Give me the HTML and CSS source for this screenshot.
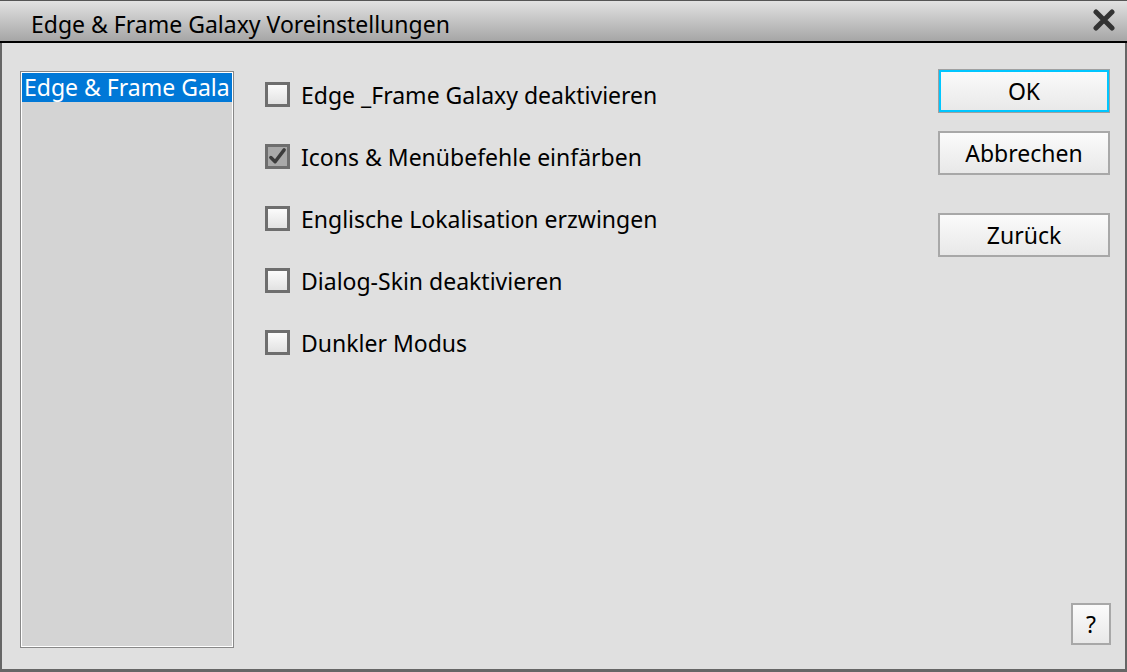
FILE: index.html
```html
<!DOCTYPE html>
<html lang="de">
<head>
<meta charset="utf-8">
<title>Edge &amp; Frame Galaxy Voreinstellungen</title>
<link rel="stylesheet" href="styles.css">
</head>
<body>
<div class="window">
  <div class="titlebar">
    <span class="title">Edge &amp; Frame Galaxy Voreinstellungen</span>
    <svg class="close" width="22" height="22" viewBox="0 0 22 22"><path d="M3 3 L19 19 M19 3 L3 19" stroke="#333" stroke-width="5" stroke-linecap="round"/></svg>
  </div>
  <div class="body">
    <div class="list">
      <div class="list-inner">
        <div class="item selected">Edge &amp; Frame Gala</div>
      </div>
    </div>
    <div class="options">
      <label class="opt"><span class="cb"></span><span>Edge _Frame Galaxy deaktivieren</span></label>
      <label class="opt"><span class="cb checked"><svg width="20" height="20" viewBox="0 0 20 20"><path d="M3 10.5 L7.5 15 L17 2.5" fill="none" stroke="#3c3c3c" stroke-width="3.6" stroke-linecap="round" stroke-linejoin="round"/></svg></span><span>Icons &amp; Menübefehle einfärben</span></label>
      <label class="opt"><span class="cb"></span><span>Englische Lokalisation erzwingen</span></label>
      <label class="opt"><span class="cb"></span><span>Dialog-Skin deaktivieren</span></label>
      <label class="opt"><span class="cb"></span><span>Dunkler Modus</span></label>
    </div>
    <div class="side">
      <div class="buttons">
        <button class="btn default">OK</button>
        <button class="btn">Abbrechen</button>
        <button class="btn back">Zurück</button>
      </div>
      <button class="btn help">?</button>
    </div>
  </div>
</div>
</body>
</html>
```
FILE: styles.css
```css
* { box-sizing: border-box; }
html, body { margin: 0; padding: 0; }
body {
  width: 1127px; height: 672px; overflow: hidden;
  font-family: "Noto Sans", "Open Sans", "Liberation Sans", sans-serif;
  color: #000;
}
.window {
  width: 1127px; height: 672px;
  display: flex; flex-direction: column;
  background: #e0e0e0;
  border-left: 2px solid #666;
  border-right: 2px solid #666;
  border-bottom: 3px solid #666;
}
.titlebar {
  height: 43px;
  margin: 0 -2px;
  border-top: 1px solid #555;
  border-bottom: 2px solid #000;
  background: linear-gradient(#e2e2e2, #a6a6a6);
  display: flex; align-items: center; justify-content: space-between;
  padding: 0 12px 0 31px;
}
.title { font-size: 23px; line-height: 1; padding-top: 6px; }
.close { display: block; margin-top: -2px; }
.body { flex: 1; display: flex; padding: 28px 15px 21px 18px; }
.list {
  width: 214px; height: 577px;
  border: 1px solid #888;
  background: #fff;
  padding: 1px;
}
.list-inner { width: 100%; height: 100%; background: #d4d4d4; overflow: hidden; }
.item {
  height: 29px; font-size: 23px; line-height: 29px;
  white-space: nowrap; padding-left: 2px; overflow: hidden;
}
.item.selected { background: #0078d7; color: #fff; }
.options { flex: 1; display: flex; flex-direction: column; gap: 37px; padding: 11px 0 0 31px; }
.opt { display: flex; align-items: center; gap: 11px; font-size: 23px; height: 25px; }
.cb {
  width: 25px; height: 25px; flex: none;
  border: 3px solid #6e6e6e;
  background: linear-gradient(#fbfbfb, #e2e2e2);
  display: flex; align-items: center; justify-content: center;
}
.cb.checked { background: #a9a9a9; }
.cb svg { display: block; }
.side { width: 172px; display: flex; flex-direction: column; justify-content: space-between; align-items: flex-end; }
.buttons { width: 172px; display: flex; flex-direction: column; gap: 18px; margin-top: -2px; }
.btn {
  font-family: inherit; font-size: 23px; color: #000;
  height: 44px; width: 172px;
  border: 2px solid #a8a8a8;
  background: linear-gradient(#fbfbfb, #e8e8e8);
  padding: 0; border-radius: 0;
}
.btn.default { border: 1px solid #a0a0a0; box-shadow: inset 0 0 0 2px #00c6ff; }
.btn.back { margin-top: 20px; }
.btn.help { width: 40px; height: 42px; margin-right: -1px; margin-bottom: 3px; }
```
